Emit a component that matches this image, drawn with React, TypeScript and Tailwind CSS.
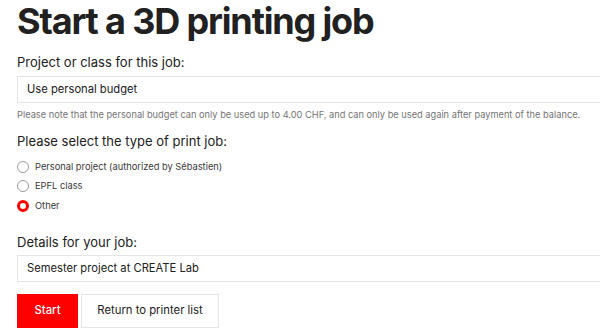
import { useState } from 'react'

const jobTypes = [
  'Personal project (authorized by Sébastien)',
  'EPFL class',
  'Other',
]

export default function App() {
  const [jobType, setJobType] = useState('Other')

  return (
    <div className="w-[600px] h-[335px] overflow-hidden bg-white font-['Inter',sans-serif] text-[#212121]">
      <div className="w-[640px] pl-[17px]">
        {/* Title */}
        <h1 className="pt-[1px] text-[36px] font-bold leading-[40px] tracking-[-1.15px]">
          Start a 3D printing job
        </h1>

        {/* Project / class */}
        <label className="mt-[13px] block text-[13px] leading-[16px]">
          Project or class for this job:
        </label>
        <div className="mt-[6px] flex h-[27px] items-center border border-[#e4e4e4] pl-[9px] text-[11.2px]">
          Use personal budget
        </div>
        <p className="mt-[6px] text-[9.25px] leading-[12px] text-[#747474]">
          Please note that the personal budget can only be used up to 4.00
          CHF, and can only be used again after payment of the balance.
        </p>

        {/* Job type */}
        <label className="mt-[12px] block text-[13px] leading-[16px]">
          Please select the type of print job:
        </label>
        <div className="mt-[8px] flex flex-col">
          {jobTypes.map((t) => (
            <div
              key={t}
              className="flex h-[19.5px] cursor-pointer items-center gap-[6px] text-[9.3px] text-[#3a3a3a]"
              onClick={() => setJobType(t)}
            >
              {jobType === t ? (
                <span className="h-[12px] w-[12px] rounded-full border-[3.5px] border-[#ff0000] bg-white" />
              ) : (
                <span className="h-[12px] w-[12px] rounded-full border border-[#9a9a9a] bg-white" />
              )}
              <span>{t}</span>
            </div>
          ))}
        </div>

        {/* Details */}
        <label className="mt-[18px] block text-[13px] leading-[16px]">
          Details for your job:
        </label>
        <div className="mt-[5px] flex h-[27px] items-center border border-[#e4e4e4] pl-[9px] text-[11.2px]">
          Semester project at CREATE Lab
        </div>

        {/* Actions */}
        <div className="mt-[12px] flex gap-[3px]">
          <button className="h-[34px] w-[61px] bg-[#ff0000] text-[11.3px] font-medium text-white">
            Start
          </button>
          <button className="h-[34px] w-[138px] border border-[#e4e4e4] bg-white text-[11.3px]">
            Return to printer list
          </button>
        </div>
      </div>
    </div>
  )
}
